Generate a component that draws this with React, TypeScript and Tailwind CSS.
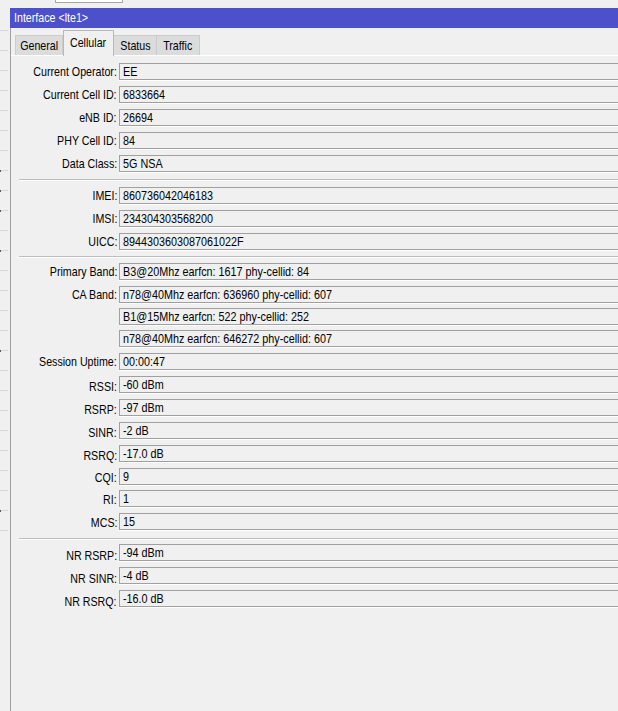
import React from "react";

type Row = { label: string; value: string; mt: string; lab?: string };

const sections: Row[][] = [
  [
    { label: "Current Operator:", value: "EE", mt: "mt-[7px]" },
    { label: "Current Cell ID:", value: "6833664", mt: "mt-[6px]" },
    { label: "eNB ID:", value: "26694", mt: "mt-[6px]" },
    { label: "PHY Cell ID:", value: "84", mt: "mt-[6px]" },
    { label: "Data Class:", value: "5G NSA", mt: "mt-[6px]" },
  ],
  [
    { label: "IMEI:", value: "860736042046183", mt: "mt-[6px]" },
    { label: "IMSI:", value: "234304303568200", mt: "mt-[6px]" },
    { label: "UICC:", value: "8944303603087061022F", mt: "mt-[6px]" },
  ],
  [
    { label: "Primary Band:", value: "B3@20Mhz earfcn: 1617 phy-cellid: 84", mt: "mt-[5px]" },
    { label: "CA Band:", value: "n78@40Mhz earfcn: 636960 phy-cellid: 607", mt: "mt-[6px]" },
    { label: "", value: "B1@15Mhz earfcn: 522 phy-cellid: 252", mt: "mt-[5px]" },
    { label: "", value: "n78@40Mhz earfcn: 646272 phy-cellid: 607", mt: "mt-[5px]" },
    { label: "Session Uptime:", value: "00:00:47", mt: "mt-[6px]" },
    { label: "RSSI:", value: "-60 dBm", mt: "mt-[6px]", lab: "translate-y-[2px]" },
    { label: "RSRP:", value: "-97 dBm", mt: "mt-[6px]", lab: "translate-y-[2px]" },
    { label: "SINR:", value: "-2 dB", mt: "mt-[6px]", lab: "translate-y-[2px]" },
    { label: "RSRQ:", value: "-17.0 dB", mt: "mt-[6px]", lab: "translate-y-[2px]" },
    { label: "CQI:", value: "9", mt: "mt-[6px]", lab: "translate-y-[1px]" },
    { label: "RI:", value: "1", mt: "mt-[5px]", lab: "translate-y-[1px]" },
    { label: "MCS:", value: "15", mt: "mt-[6px]", lab: "translate-y-[1px]" },
  ],
  [
    { label: "NR RSRP:", value: "-94 dBm", mt: "mt-[4px]", lab: "translate-y-[3px]" },
    { label: "NR SINR:", value: "-4 dB", mt: "mt-[6px]", lab: "translate-y-[3px]" },
    { label: "NR RSRQ:", value: "-16.0 dB", mt: "mt-[6px]", lab: "translate-y-[3px]" },
  ],
];

const sepMt = ["mt-[7px]", "mt-[6px]", "mt-[8px]"];

const marks = new Set([7, 8, 9, 11, 16, 24]);

function FieldRow({ r }: { r: Row }) {
  return (
    <div className={`flex items-center h-[17px] ${r.mt}`}>
      <div className={`w-[106px] shrink-0 text-right leading-[17px] whitespace-nowrap ${r.lab ?? ""}`}>
        <span className="inline-block scale-x-[0.82] origin-right">{r.label}</span>
      </div>
      <div className="ml-[2px] h-[17px] flex-1 -mr-[20px] border border-[#a0a0a0] bg-[#f0f0f0] shadow-[0_1px_0_#ffffff] pl-[3px] leading-[15px] whitespace-nowrap overflow-hidden">
        <span className="inline-block scale-x-[0.83] origin-left">{r.value}</span>
      </div>
    </div>
  );
}

function Tab({ label, cls }: { label: string; cls: string }) {
  return (
    <div className={`${cls} flex justify-center whitespace-nowrap`}>
      <span className="inline-block scale-x-[0.82] origin-center">{label}</span>
    </div>
  );
}

export default function App() {
  const lines = Array.from({ length: 26 }, (_, i) => i);
  return (
    <div
      className="w-[618px] h-[711px] bg-[#f0f0f0] overflow-hidden flex text-[13px] text-black"
      style={{ fontFamily: '"Liberation Sans", Arial, sans-serif' }}
    >
      {/* background list strip */}
      <div className="w-[10px] shrink-0 flex flex-col">
        {lines.map((i) => (
          <div
            key={i}
            className={`${i === 0 ? "h-[31px]" : "h-[20px]"} w-[8px] border-b border-[#d7d7d7] relative`}
          >
            {marks.has(i) && <div className="absolute left-0 bottom-[-2px] w-[1px] h-[2px] bg-[#555555]" />}
          </div>
        ))}
      </div>

      {/* window */}
      <div className="flex-1 flex flex-col min-w-0">
        <div className="h-[8px] shrink-0">
          <div className="ml-[45px] w-[68px] h-[3px] bg-white border border-t-0 border-[#a8a8a8]" />
        </div>
        <div className="h-[20px] shrink-0 bg-[#4c50cb] text-white pl-[4px] leading-[20px] whitespace-nowrap">
          <span className="inline-block scale-x-[0.82] origin-left">Interface &lt;lte1&gt;</span>
        </div>
        <div className="flex-1 flex flex-col border-l border-[#a0a0a0]">
          {/* tabs */}
          <div className="h-[27px] shrink-0 flex items-end pl-[4px] relative z-10">
            <Tab label="General" cls="w-[48px] h-[20px] bg-[#dcdcdc] border border-b-0 border-[#cbcbcb] leading-[19px]" />
            <Tab label="Cellular" cls="w-[51px] h-[26px] -mb-[1px] bg-[#f0f0f0] border border-b-0 border-[#b9b9b9] leading-[24px]" />
            <Tab label="Status" cls="w-[43px] h-[20px] bg-[#dcdcdc] border border-b-0 border-l-0 border-[#cbcbcb] leading-[19px]" />
            <Tab label="Traffic" cls="w-[43px] h-[20px] bg-[#dcdcdc] border border-b-0 border-l-0 border-[#cbcbcb] leading-[19px]" />
          </div>
          {/* panel */}
          <div className="flex-1 border-t border-white flex flex-col">
            {sections.map((sec, si) => (
              <React.Fragment key={si}>
                {si > 0 && (
                  <div
                    className={`${sepMt[si - 1]} ml-[8px] h-[2px] border-t border-[#bdbdbd] border-b border-b-white`}
                  />
                )}
                {sec.map((r, ri) => (
                  <FieldRow key={ri} r={r} />
                ))}
              </React.Fragment>
            ))}
          </div>
        </div>
      </div>
    </div>
  );
}
